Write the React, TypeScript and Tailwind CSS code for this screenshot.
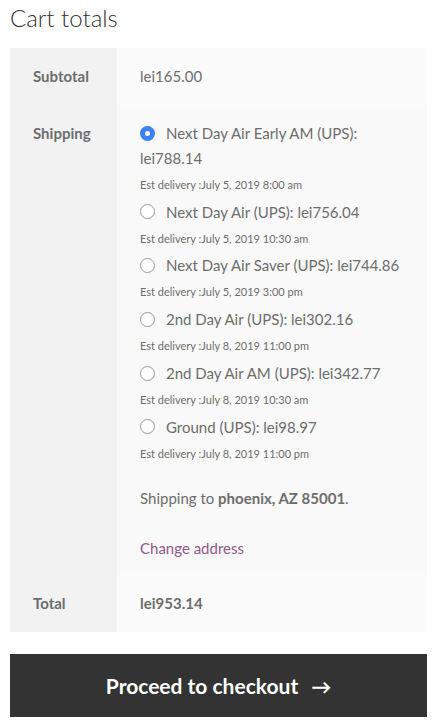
import React from "react";

const options = [
  { label: "Next Day Air Early AM (UPS): lei788.14", est: "July 5, 2019 8:00 am", checked: true },
  { label: "Next Day Air (UPS): lei756.04", est: "July 5, 2019 10:30 am" },
  { label: "Next Day Air Saver (UPS): lei744.86", est: "July 5, 2019 3:00 pm" },
  { label: "2nd Day Air (UPS): lei302.16", est: "July 8, 2019 11:00 pm" },
  { label: "2nd Day Air AM (UPS): lei342.77", est: "July 8, 2019 10:30 am" },
  { label: "Ground (UPS): lei98.97", est: "July 8, 2019 11:00 pm" },
];

function Radio({ checked }: { checked?: boolean }) {
  if (checked) {
    return (
      <span className="inline-flex w-[15px] h-[15px] rounded-full bg-[#3b82f6] items-center justify-center align-middle relative top-[-2px]">
        <span className="w-[5px] h-[5px] rounded-full bg-white" />
      </span>
    );
  }
  return (
    <span className="inline-block w-[15px] h-[15px] rounded-full border border-[#9a9a9a] bg-white align-middle relative top-[-2px]" />
  );
}

export default function App() {
  return (
    <div className="w-[437px] min-h-[725px] bg-white px-[10px] text-[#6d6d6d]" style={{ fontFamily: "Lato, 'Liberation Sans', sans-serif" }}>
      <h2 className="text-[24px] font-light text-[#333] leading-[36px] pt-0 mb-[12px]">Cart totals</h2>
      <div className="w-full text-[15px] leading-[25px]">
        <div className="flex">
          <div className="w-[107px] shrink-0 bg-[#f2f2f2] pl-[23px] py-[16px] font-bold">Subtotal</div>
          <div className="flex-1 bg-[#fbfbfb] pl-[23px] py-[16px]">lei165.00</div>
        </div>
        <div className="flex">
          <div className="w-[107px] shrink-0 bg-[#f2f2f2] pl-[23px] pt-[16px] font-bold">Shipping</div>
          <div className="flex-1 bg-[#f9f9f9] pl-[23px] pr-[20px] pt-[16px] pb-[14px]">
            <ul className="flex flex-col">
              {options.map((o) => (
                <li key={o.label} className="flex flex-col">
                  <div className="leading-[25px]">
                    <Radio checked={o.checked} />
                    <span className="ml-[11px]">{o.label}</span>
                  </div>
                  <div className="text-[11px] leading-[28.7px]">Est delivery :{o.est}</div>
                </li>
              ))}
            </ul>
            <p className="mt-[18px] leading-[25px]">
              Shipping to <strong className="font-bold">phoenix, AZ 85001</strong>.
            </p>
            <p className="mt-[25px] leading-[25px] text-[#96588a]">Change address</p>
          </div>
        </div>
        <div className="flex">
          <div className="w-[107px] shrink-0 bg-[#f2f2f2] pl-[23px] py-[16px] font-bold">Total</div>
          <div className="flex-1 bg-[#fbfbfb] pl-[23px] py-[16px] font-bold">lei953.14</div>
        </div>
      </div>
      <button className="mt-[22px] w-full h-[63px] bg-[#333333] text-white text-[21px] font-bold flex items-center justify-center gap-[13px]">
        <span>Proceed to checkout</span>
        <span className="text-[20px]">→</span>
      </button>
    </div>
  );
}
